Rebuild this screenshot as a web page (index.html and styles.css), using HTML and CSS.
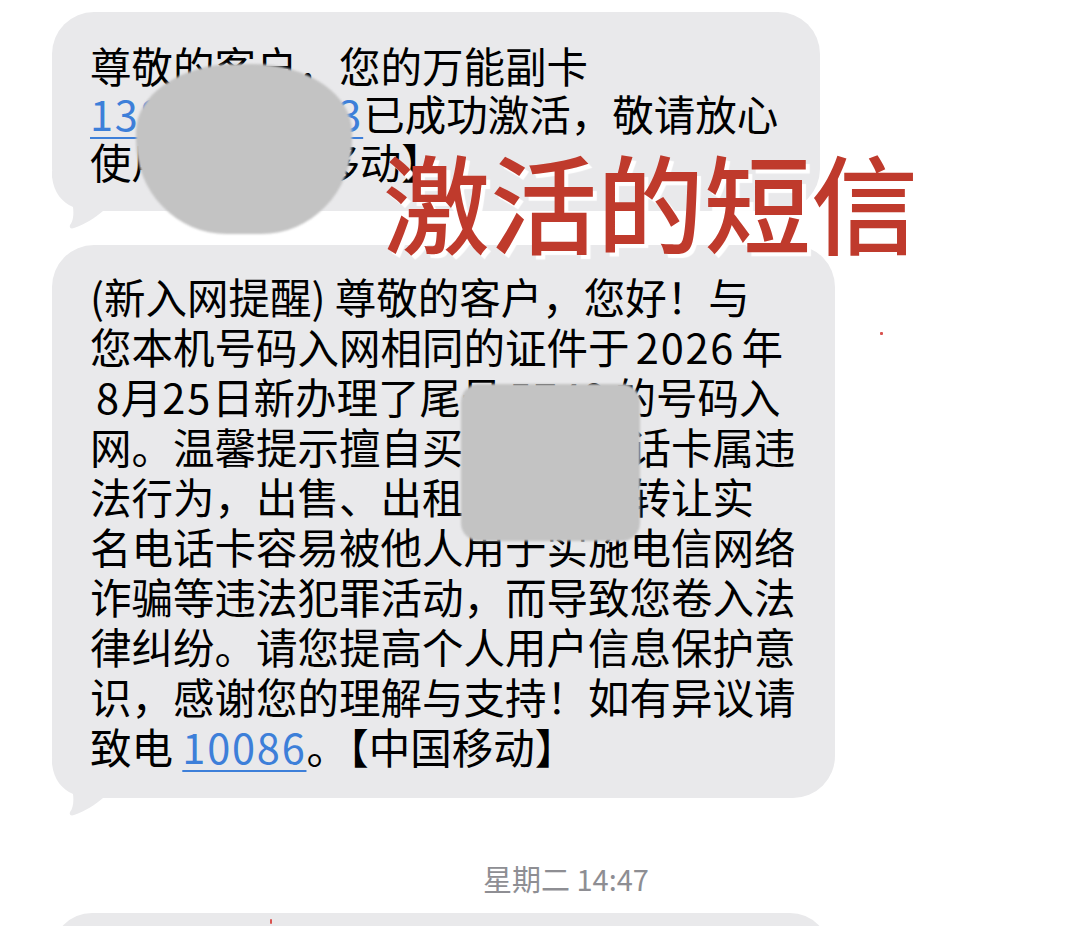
FILE: index.html
```html
<!DOCTYPE html>
<html lang="zh-CN">
<head>
<meta charset="utf-8">
<title>激活的短信</title>
<link rel="stylesheet" href="styles.css">
</head>
<body>
<div class="screen">
  <div class="thread">
    <div class="bubble b1">
      <p class="msg">尊敬的客户，您的万能副卡<br><span class="link num">13800001233</span>已成功激活，敬请放心<br>使用。【中国移动】</p>
      <svg class="tail" viewBox="0 0 70 60" width="70" height="60"><path d="M0,0 L0,6 C2,22 10,31 21,36 C22,44 21,50 18,54 C17,57 19,58 22,57 C33,53 43,47 51,40 L70,40 L70,0 Z"/></svg>
    </div>
    <div class="bubble b2">
      <p class="msg">(新入网提醒) 尊敬的客户，您好！与<br><span class="tight">您本机号码入网相同的证件于 <span class="num">2026</span> 年</span><br><span class="tight"><span class="lead num">8</span>月<span class="num">25</span>日新办理了尾号 <span class="num">5749</span> 的号码入</span><br>网。温馨提示擅自买卖他人电话卡属违<br>法行为，出售、出租、出借、转让实<br>名电话卡容易被他人用于实施电信网络<br>诈骗等违法犯罪活动，而导致您卷入法<br>律纠纷。请您提高个人用户信息保护意<br>识，感谢您的理解与支持！如有异议请<br>致电 <span class="link num">10086</span>。【中国移动】</p>
      <svg class="tail" viewBox="0 0 70 60" width="70" height="60"><path d="M0,0 L0,6 C2,22 10,31 21,36 C22,44 21,50 18,54 C17,57 19,58 22,57 C33,53 43,47 51,40 L70,40 L70,0 Z"/></svg>
    </div>
    <div class="time">星期二 14:47</div>
    <div class="bubble b3"></div>
  </div>
  <div class="mask mask-round"></div>
  <div class="mask mask-square"></div>
  <div class="caption">激活的短信</div>
  <i class="dot dot-a"></i>
  <i class="dot dot-b"></i>
</div>
</body>
</html>
```
FILE: styles.css
```css
* {
  box-sizing: border-box;
  margin: 0;
  padding: 0;
}

html, body {
  width: 1080px;
  height: 926px;
  overflow: hidden;
  background: #ffffff;
}

body {
  font-family: "Noto Sans CJK SC", "Noto Sans", sans-serif;
}

.screen {
  position: relative;
  width: 1080px;
  height: 926px;
  overflow: hidden;
}

.thread {
  display: flex;
  flex-direction: column;
  align-items: flex-start;
  padding: 12px 0 0 52px;
}

.bubble {
  position: relative;
  background: #e9e9eb;
  border-radius: 42px;
  color: #000000;
  font-size: 41.5px;
  white-space: nowrap;
}

.msg {
  position: relative;
  z-index: 1;
}

.b1 {
  width: 768px;
  padding: 29px 38px 26px;
  line-height: 48px;
}

.b2 {
  width: 783px;
  margin-top: 34px;
  padding: 26px 38px 27px;
  line-height: 50px;
}

.b3 {
  width: 778px;
  height: 80px;
  margin-top: 18px;
}

.num {
  letter-spacing: 1.8px;
}

.tight {
  word-spacing: -3px;
}

.lead {
  padding-left: 6px;
}

.link {
  color: #3d7fd9;
  text-decoration: underline;
  text-decoration-thickness: 2px;
  text-underline-offset: 6px;
}

.tail {
  position: absolute;
  left: 0;
  bottom: -20px;
  fill: #e9e9eb;
}

.time {
  align-self: stretch;
  margin-top: 63px;
  text-align: center;
  font-size: 29px;
  line-height: 34px;
  color: #8e8e93;
}

.mask {
  position: absolute;
  z-index: 2;
  background: #c3c3c3;
  filter: blur(0.8px);
}

.mask-round {
  left: 136px;
  top: 64px;
  width: 216px;
  height: 170px;
  border-radius: 46% 46% 42% 42% / 40% 40% 55% 55%;
}

.mask-square {
  left: 461px;
  top: 384px;
  width: 179px;
  height: 157px;
  border-radius: 18px;
}

.caption {
  position: absolute;
  z-index: 3;
  left: 383px;
  top: 141px;
  font-size: 107px;
  line-height: 1.1;
  font-weight: 500;
  color: #bf3a2c;
  white-space: nowrap;
  text-shadow: 4px 4px 1px #ffffff;
}

.dot {
  position: absolute;
  z-index: 3;
  background: #d9534f;
  border-radius: 1px;
}

.dot-a {
  left: 880px;
  top: 332px;
  width: 3px;
  height: 3px;
}

.dot-b {
  left: 270px;
  top: 919px;
  width: 2px;
  height: 5px;
}
```
